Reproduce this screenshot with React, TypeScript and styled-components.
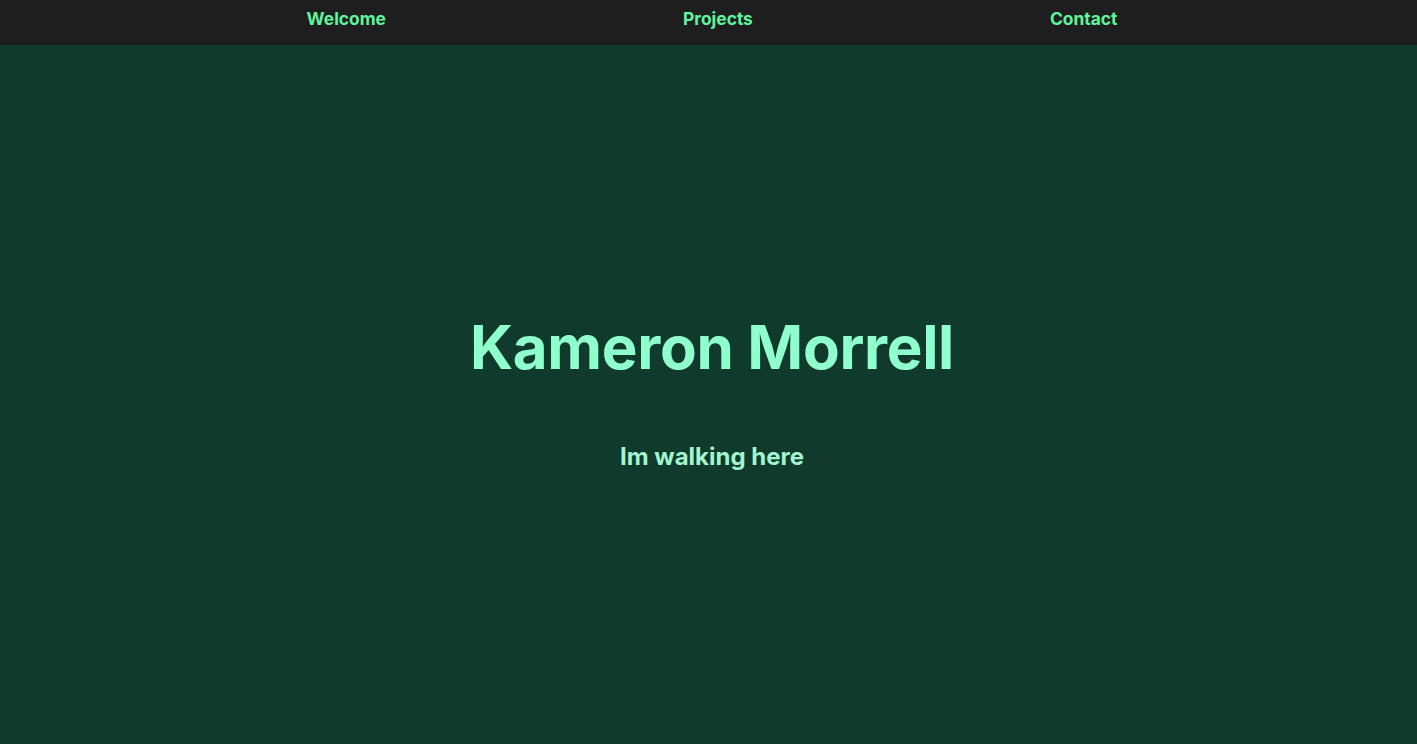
import React from "react";
import styled, { createGlobalStyle } from "styled-components";

const GlobalStyle = createGlobalStyle`
  html, body { margin: 0; padding: 0; }
  body {
    background: #0f3a2c;
    font-family: Inter, "Noto Sans", sans-serif;
  }
  #root { min-height: 100vh; display: flex; flex-direction: column; }
`;

const NavBar = styled.nav`
  height: 45px;
  background: #1e1e1e;
  display: flex;
  justify-content: center;
  padding-left: 7px;
`;

const NavList = styled.ul`
  list-style: none;
  margin: 0;
  padding: 8px 0 0;
  display: flex;
  gap: 297px;
  align-items: flex-start;
`;

const NavLink = styled.a`
  color: #5ef59e;
  font-weight: 700;
  font-size: 17.4px;
  line-height: 22px;
  text-decoration: none;
`;

const Hero = styled.main`
  flex: 1;
  display: flex;
  flex-direction: column;
  align-items: center;
  justify-content: center;
  padding-left: 7px;
  padding-bottom: 6px;
`;

const Title = styled.h1`
  margin: 0;
  color: #8fffce;
  font-size: 60px;
  font-weight: 700;
  line-height: 72px;
  letter-spacing: -0.3px;
`;

const Subtitle = styled.h2`
  margin: 59px 0 0;
  color: #a2f5cf;
  font-size: 24px;
  font-weight: 700;
  line-height: 30px;
`;

export default function App() {
  return (
    <>
      <GlobalStyle />
      <NavBar>
        <NavList>
          <li><NavLink href="#">Welcome</NavLink></li>
          <li><NavLink href="#">Projects</NavLink></li>
          <li><NavLink href="#">Contact</NavLink></li>
        </NavList>
      </NavBar>
      <Hero>
        <Title>Kameron Morrell</Title>
        <Subtitle>Im walking here</Subtitle>
      </Hero>
    </>
  );
}
